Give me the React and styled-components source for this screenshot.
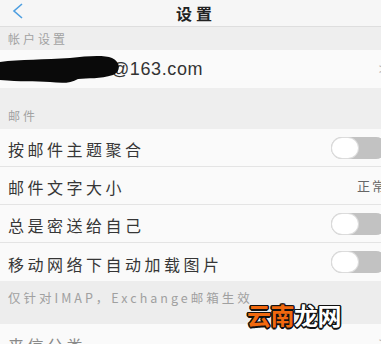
import React from 'react'
import styled, { createGlobalStyle } from 'styled-components'

const Global = createGlobalStyle`
  body {
    margin: 0;
    overflow: hidden;
    background: #ececec;
    font-family: "Noto Sans CJK SC", "Noto Sans", sans-serif;
  }
`

const Page = styled.div`
  position: relative;
  width: 396px;
  height: 344px;
  overflow: hidden;
  background: #ececec;
`

const NavBar = styled.div`
  position: relative;
  height: 26px;
  display: flex;
  align-items: center;
  justify-content: center;
  background: #f6f6f6;
  border-bottom: 1px solid #dedede;
`

const Back = styled.svg`
  position: absolute;
  left: 12px;
  top: 3px;
`

const Title = styled.div`
  margin-left: -4px;
  font-size: 16px;
  font-weight: 700;
  letter-spacing: 4px;
  color: #222;
`

const SectionHeader = styled.div`
  height: ${p => p.$h}px;
  display: flex;
  align-items: ${p => (p.$bottom ? 'flex-end' : 'center')};
  padding: 0 8px ${p => (p.$bottom ? 5 : 0)}px;
  box-sizing: border-box;
  font-size: 12px;
  letter-spacing: 3px;
  color: #a2a2a2;
  background: #eeeeee;
`

const Row = styled.div`
  position: relative;
  height: ${p => p.$h || 38}px;
  display: flex;
  align-items: center;
  justify-content: space-between;
  padding: 0 13px 0 8px;
  box-sizing: border-box;
  background: #fafafa;
  border-bottom: ${p => (p.$last ? 'none' : '1px solid #e4e4e4')};
`

const Label = styled.div`
  font-size: 16px;
  letter-spacing: 3.5px;
  color: ${p => p.$muted ? '#8a8a8a' : '#363636'};
  padding-top: 3px;
`

const Email = styled.div`
  margin-left: 103px;
  font-family: "Liberation Sans", "Noto Sans", sans-serif;
  font-size: 18px;
  letter-spacing: 0.6px;
  color: #333;
`

const Scribble = styled.svg`
  position: absolute;
  left: 0;
  top: 5px;
`

const Arrow = styled.span`
  font-family: "Liberation Sans", sans-serif;
  font-size: 14px;
  color: #bbb;
  margin-right: -4px;
`

const Value = styled.span`
  font-size: 13px;
  letter-spacing: 2px;
  color: #666;
  margin-right: -4px;
`

const Toggle = styled.div`
  width: 56px;
  height: 22px;
  border-radius: 11px;
  background: #c2c2c2;
  display: flex;
  align-items: center;
  margin-right: -4px;
`

const Knob = styled.div`
  width: 26px;
  height: 20px;
  margin-left: 1px;
  border-radius: 10px;
  background: #fff;
  box-shadow: 0 0 0 1px #dcdcdc;
`

const Note = styled.div`
  height: 43px;
  padding: 7px 8px 0;
  box-sizing: border-box;
  font-size: 12.5px;
  letter-spacing: 3px;
  color: #a0a0a0;
  background: #ededed;
`

const Watermark = styled.div`
  position: absolute;
  left: 247px;
  top: 297px;
  font-size: 24px;
  font-weight: 700;
  letter-spacing: -0.5px;
  color: #fff;
  text-shadow:
    -1px -1px 0 #111, 1px -1px 0 #111, -1px 1px 0 #111, 1px 1px 0 #111,
    0 -1.5px 0 #111, 0 1.5px 0 #111, -1.5px 0 0 #111, 1.5px 0 0 #111;
`

const Orange = styled.span`
  color: #f2690f;
`

const Switch = () => (
  <Toggle>
    <Knob />
  </Toggle>
)

export default function App() {
  return (
    <Page>
      <Global />
      <NavBar>
        <Back width="14" height="16" viewBox="0 0 14 16">
          <polyline points="10,1 2,8 10,15" fill="none" stroke="#4d9ee0" strokeWidth="1.6" />
        </Back>
        <Title>设置</Title>
      </NavBar>
      <SectionHeader $h={23}>帐户设置</SectionHeader>
      <Row $h={38} $last>
        <Scribble width="122" height="30" viewBox="0 0 122 30">
          <path
            d="M0 7 C20 4 45 5 70 3 C88 1 104 0 112 3 C121 7 121 17 113 20 C100 24 88 23 78 24 C70 29 60 28 50 27 C35 26 20 27 0 25 Z"
            fill="#0a0a0a"
          />
        </Scribble>
        <Email>@163.com</Email>
        <Arrow>&gt;</Arrow>
      </Row>
      <SectionHeader $h={41} $bottom>邮件</SectionHeader>
      <Row>
        <Label>按邮件主题聚合</Label>
        <Switch />
      </Row>
      <Row>
        <Label>邮件文字大小</Label>
        <Value>正常</Value>
      </Row>
      <Row>
        <Label>总是密送给自己</Label>
        <Switch />
      </Row>
      <Row $last>
        <Label>移动网络下自动加载图片</Label>
        <Switch />
      </Row>
      <Note>仅针对IMAP，Exchange邮箱生效</Note>
      <Row $last>
        <Label $muted>来信分类</Label>
        <Arrow>&gt;</Arrow>
      </Row>
      <Watermark>
        <Orange>云南</Orange>龙网
      </Watermark>
    </Page>
  )
}
